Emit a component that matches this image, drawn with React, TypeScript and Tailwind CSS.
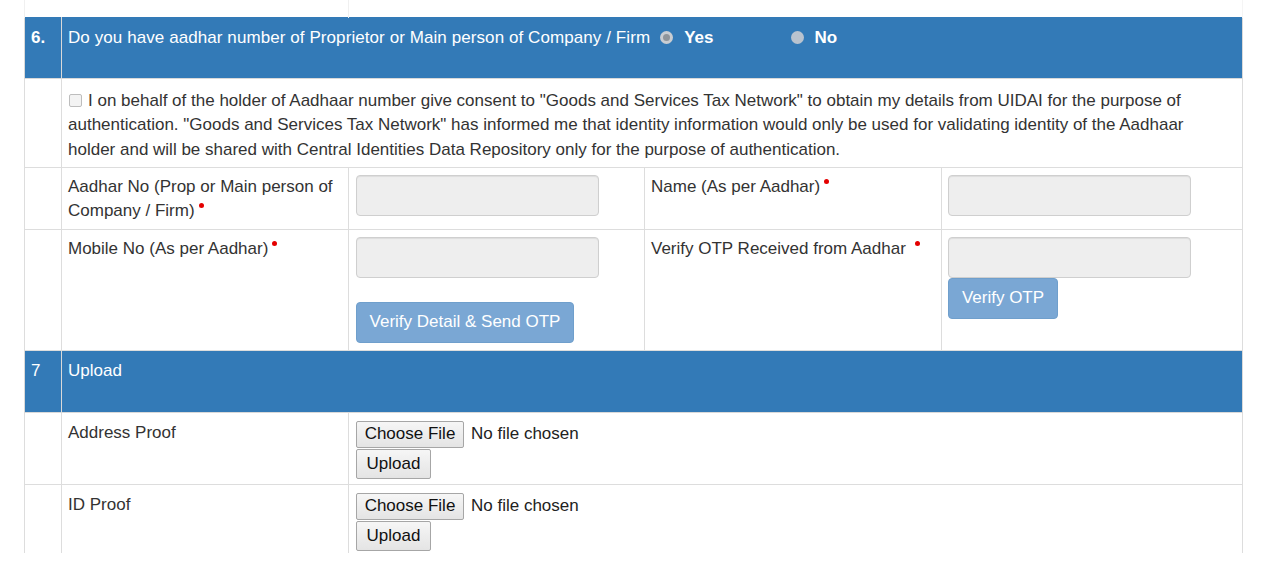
import React from "react";

const Req = ({ gap = "ml-[4px]" }: { gap?: string }) => (
  <span className={`inline-block ${gap} w-[5px] h-[5px] rounded-full bg-[#e40000] align-[8px]`} />
);

const Input = () => (
  <div className="w-[243px] h-[41px] rounded-[4px] border border-[#cfcfcf] bg-[#eeeeee] shadow-[inset_0_1px_1px_rgba(0,0,0,0.075)]" />
);

const FileBtn = ({ children, cls }: { children: React.ReactNode; cls: string }) => (
  <div
    className={`inline-flex items-center justify-center border border-[#a6a6a6] rounded-[2px] bg-gradient-to-b from-[#f6f6f6] to-[#e4e4e4] text-[#111] ${cls}`}
  >
    {children}
  </div>
);

export default function App() {
  const td = "border border-[#dddddd] align-top";
  return (
    <div className="w-[1267px] h-[576px] bg-white overflow-hidden font-['Liberation_Sans',Arial,sans-serif] text-[17px] leading-[24px] text-[#333]">
      <div className="ml-[24px] h-[553px] overflow-hidden">
        <table className="table-fixed border-collapse w-[1218px]">
          <colgroup>
            <col className="w-[37px]" />
            <col className="w-[287px]" />
            <col className="w-[296px]" />
            <col className="w-[297px]" />
            <col className="w-[301px]" />
          </colgroup>
          <tbody>
            <tr className="h-[17px]">
              <td className="border-l border-r border-[#f0f0f0]" colSpan={2}></td>
              <td className="border-l border-r border-[#f5f5f5]" colSpan={3}></td>
            </tr>
            {/* Section 6 header */}
            <tr className="h-[61px] bg-[#337ab7] text-white">
              <td className="border border-[#d9d9d9] border-t-[#337ab7] align-top pl-[6px] pt-[8px] font-bold">6.</td>
              <td className="border border-[#d9d9d9] border-t-[#337ab7] align-top pl-[6px] pt-[8px]" colSpan={4}>
                <div className="flex items-center">
                  <span className="tracking-[0.08px]">Do you have aadhar number of Proprietor or Main person of Company / Firm</span>
                  <span className="ml-[10px] w-[13px] h-[13px] rounded-full bg-[#c9cdd2] flex items-center justify-center">
                    <span className="w-[7px] h-[7px] rounded-full bg-[#8f959b]" />
                  </span>
                  <span className="ml-[11px] font-bold">Yes</span>
                  <span className="ml-[78px] w-[13px] h-[13px] rounded-full bg-[#b9c3cf]" />
                  <span className="ml-[10px] font-bold">No</span>
                </div>
              </td>
            </tr>
            {/* Consent */}
            <tr className="h-[89px]">
              <td className={td}></td>
              <td className={`${td} pl-[6px] pr-[8px] pt-[10px] leading-[24.5px]`} colSpan={4}>
                <span className="inline-block w-[13px] h-[13px] mr-[6px] ml-[1px] align-[-1px] rounded-[2px] border border-[#bdbdbd] bg-[#f3f3f3]" />
                I on behalf of the holder of Aadhaar number give consent to "Goods and Services Tax Network" to obtain my details from UIDAI for the purpose of authentication. "Goods and Services Tax Network" has informed me that identity information would only be used for validating identity of the Aadhaar holder and will be shared with Central Identities Data Repository only for the purpose of authentication.
              </td>
            </tr>
            {/* Aadhar / Name */}
            <tr className="h-[62px]">
              <td className={td}></td>
              <td className={`${td} pl-[6px] pr-[8px] pt-[7px]`}>
                Aadhar No (Prop or Main person of Company / Firm)
                <Req />
              </td>
              <td className={`${td} pl-[7px] pt-[7px]`}>
                <Input />
              </td>
              <td className={`${td} pl-[6px] pt-[7px]`}>
                Name (As per Aadhar)
                <Req />
              </td>
              <td className={`${td} pl-[6px] pt-[7px]`}>
                <Input />
              </td>
            </tr>
            {/* Mobile / OTP */}
            <tr className="h-[121px]">
              <td className={td}></td>
              <td className={`${td} pl-[6px] pr-[8px] pt-[7px]`}>
                Mobile No (As per Aadhar)
                <Req />
              </td>
              <td className={`${td} pl-[7px] pt-[7px]`}>
                <Input />
                <div className="mt-[24px] w-[218px] h-[41px] rounded-[4px] bg-[#7aa7d4] border border-[#6f9fcc] text-white flex items-center justify-center">
                  Verify Detail &amp; Send OTP
                </div>
              </td>
              <td className={`${td} pl-[6px] pt-[7px]`}>
                Verify OTP Received from Aadhar
                <Req gap="ml-[9px]" />
              </td>
              <td className={`${td} pl-[6px] pt-[7px]`}>
                <Input />
                <div className="w-[110px] h-[41px] rounded-[4px] bg-[#7aa7d4] border border-[#6f9fcc] text-white flex items-center justify-center">
                  Verify OTP
                </div>
              </td>
            </tr>
            {/* Section 7 header */}
            <tr className="h-[62px] bg-[#337ab7] text-white">
              <td className="border border-[#d9d9d9] align-top pl-[6px] pt-[8px]">7</td>
              <td className="border border-[#d9d9d9] align-top pl-[6px] pt-[8px]" colSpan={4}>
                Upload
              </td>
            </tr>
            {/* Address proof */}
            <tr className="h-[72px]">
              <td className={td}></td>
              <td className={`${td} pl-[6px] pt-[8px]`}>Address Proof</td>
              <td className={`${td} pl-[7px] pt-[8px]`} colSpan={3}>
                <div className="flex items-center">
                  <FileBtn cls="w-[108px] h-[27px]">Choose File</FileBtn>
                  <span className="ml-[7px] text-[#222]">No file chosen</span>
                </div>
                <FileBtn cls="mt-[1px] w-[75px] h-[30px]">Upload</FileBtn>
              </td>
            </tr>
            {/* ID proof */}
            <tr className="h-[100px]">
              <td className={td}></td>
              <td className={`${td} pl-[6px] pt-[8px]`}>ID Proof</td>
              <td className={`${td} pl-[7px] pt-[8px]`} colSpan={3}>
                <div className="flex items-center">
                  <FileBtn cls="w-[108px] h-[27px]">Choose File</FileBtn>
                  <span className="ml-[7px] text-[#222]">No file chosen</span>
                </div>
                <FileBtn cls="mt-[1px] w-[75px] h-[30px]">Upload</FileBtn>
              </td>
            </tr>
          </tbody>
        </table>
      </div>
    </div>
  );
}
